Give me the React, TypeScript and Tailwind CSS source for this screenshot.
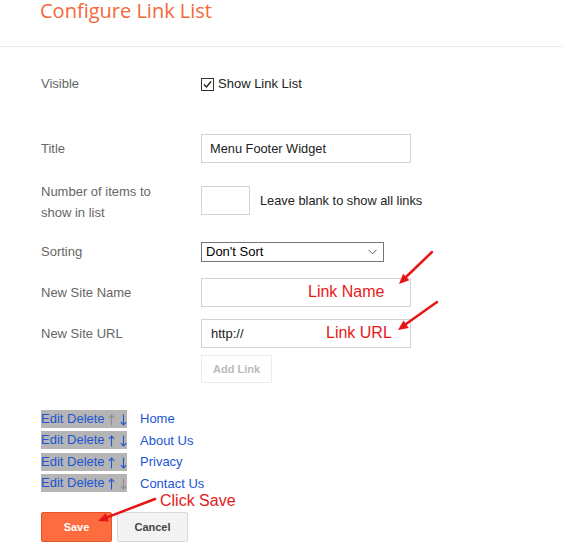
import React from 'react'

const LINKS = ['Home', 'About Us', 'Privacy', 'Contact Us']

function Field({ label, children, className = '' }: { label: React.ReactNode; children: React.ReactNode; className?: string }) {
  return (
    <div className={`flex ${className}`}>
      <div className="w-[160px] shrink-0 text-[13px] text-[#666]">{label}</div>
      <div className="flex items-center">{children}</div>
    </div>
  )
}

function Arrow({ up, muted }: { up?: boolean; muted?: boolean }) {
  return (
    <svg
      width="7" height="12" viewBox="0 0 7 12" fill="none"
      stroke={muted ? '#8d8d8d' : '#2155d3'} strokeWidth="1.1"
      className={up ? '' : 'rotate-180'}
    >
      <path d="M3.5 1 V11.5 M0.8 3.8 L3.5 1 L6.2 3.8" />
    </svg>
  )
}

export default function App() {
  return (
    <div className="relative w-[563px] h-[545px] overflow-hidden bg-white font-['Liberation_Sans',Arial,sans-serif]">
      {/* ── Header ── */}
      <div className="h-[47px] border-b border-[#ebebeb] pl-[40px]">
        <h1 className="pt-[1px] font-['Open_Sans',sans-serif] text-[20px] leading-none text-[#f4683c]">Configure Link List</h1>
      </div>

      <div className="pl-[41px]">
        {/* Visible */}
        <Field label="Visible" className="mt-[27px] h-[20px] items-center">
          <span className="flex h-[13px] w-[13px] items-center justify-center border border-[#333] bg-white">
            <svg width="11" height="11" viewBox="0 0 11 11" fill="none" stroke="#222" strokeWidth="1.4">
              <path d="M2 5.5 L4.5 8 L9 2.5" />
            </svg>
          </span>
          <span className="ml-[4px] text-[13px] text-[#222]">Show Link List</span>
        </Field>

        {/* Title */}
        <Field label="Title" className="mt-[40px] h-[29px] items-center">
          <div className="flex h-[29px] w-[210px] items-center border border-[#d3d3d3] pl-[8px] text-[12.8px] text-[#222]">
            Menu Footer Widget
          </div>
        </Field>

        {/* Number of items */}
        <div className="mt-[18px] flex items-start">
          <div className="w-[160px] shrink-0">
            <p className="max-w-[140px] text-[13px] leading-[21px] text-[#666]">Number of items to show in list</p>
          </div>
          <div className="mt-[5px] flex items-center">
            <div className="h-[29px] w-[49px] border border-[#d3d3d3]" />
            <span className="ml-[10px] text-[12.8px] text-[#222]">Leave blank to show all links</span>
          </div>
        </div>

        {/* Sorting */}
        <Field label="Sorting" className="mt-[19px] h-[20px] items-center">
          <div className="flex h-[20px] w-[183px] items-center justify-between border border-[#767676] pl-[4px] pr-[6px] text-[13px] text-black">
            <span>Don't Sort</span>
            <svg width="9" height="6" viewBox="0 0 9 6" fill="none" stroke="#555" strokeWidth="1">
              <path d="M0.5 0.8 L4.5 4.8 L8.5 0.8" />
            </svg>
          </div>
        </Field>

        {/* New Site Name */}
        <Field label="New Site Name" className="mt-[16px] h-[29px] items-center">
          <div className="h-[29px] w-[210px] border border-[#d3d3d3]" />
        </Field>

        {/* New Site URL */}
        <Field label="New Site URL" className="mt-[12px] h-[29px] items-center">
          <div className="flex h-[29px] w-[210px] items-center border border-[#d3d3d3] pl-[9px] text-[13px] text-[#222]">
            http://
          </div>
        </Field>

        <div className="ml-[160px] mt-[7px]">
          <button className="h-[28px] w-[71px] border border-[#ececec] bg-white text-[11px] font-bold text-[#bbb]">Add Link</button>
        </div>

        {/* Links */}
        <div className="mt-[25px] flex flex-col">
          {LINKS.map((name, i) => (
            <div key={name} className="flex h-[21.5px] items-center whitespace-nowrap text-[13px]">
              <span className="inline-flex h-[18px] w-[86px] items-center bg-[#b5b5b5] leading-[18px] text-[#2155d3]">
                <span>Edit Delete</span>
                <span className="ml-[3px] mt-[2px] flex items-center gap-[5px]">
                  <Arrow up muted={i === 0} />
                  <Arrow muted={i === LINKS.length - 1} />
                </span>
              </span>
              <span className="ml-[13px] text-[#2155d3]">{name}</span>
            </div>
          ))}
        </div>

        {/* Buttons */}
        <div className="mt-[18px] flex gap-[5px]">
          <button className="h-[30px] w-[71px] rounded-[2px] border border-[#e0552a] bg-[#fd6c3e] text-[11px] font-bold text-white">Save</button>
          <button className="h-[30px] w-[71px] rounded-[2px] border border-[#d9d9d9] bg-[#f3f3f3] text-[11px] font-bold text-[#444]">Cancel</button>
        </div>
      </div>

      {/* ── Annotations ── */}
      <div className="pointer-events-none absolute inset-0">
        <span className="absolute left-[308px] top-[284px] text-[16px] leading-none text-[#e61919]">Link Name</span>
        <span className="absolute left-[326px] top-[325px] text-[16px] leading-none text-[#e61919]">Link URL</span>
        <span className="absolute left-[160px] top-[493px] text-[16px] leading-none text-[#e61919]">Click Save</span>
        <svg className="absolute left-0 top-0" width="563" height="545" viewBox="0 0 563 545">
          <g stroke="#e81515" strokeWidth="2.5" strokeLinecap="round" fill="#e81515">
            <line x1="432" y1="252" x2="406" y2="277" />
            <polygon stroke="none" points="399,284 409.3,280.3 403.1,273.8" />
            <line x1="437" y1="302" x2="406" y2="324" />
            <polygon stroke="none" points="398,330 408.7,327.9 403.5,320.5" />
            <line x1="155" y1="499" x2="107" y2="517.4" />
            <polygon stroke="none" points="98,521 108.9,521.6 105.7,513.2" />
          </g>
        </svg>
      </div>
    </div>
  )
}
